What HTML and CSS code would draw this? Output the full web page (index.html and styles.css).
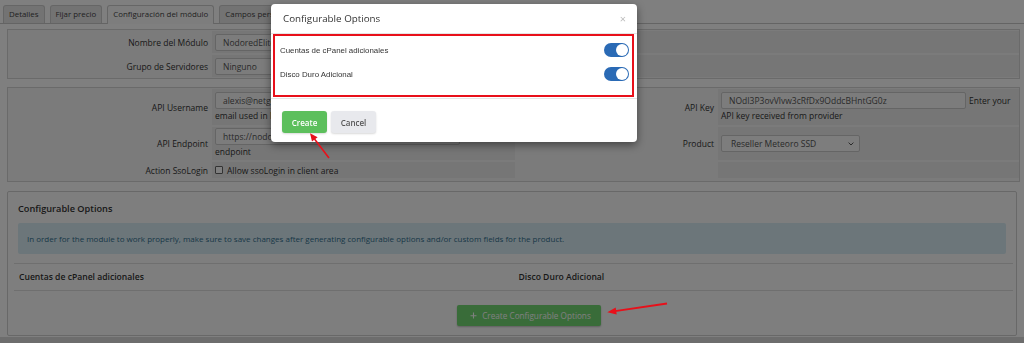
FILE: index.html
```html
<!DOCTYPE html>
<html lang="es">
<head>
<meta charset="utf-8">
<title>Configuración del módulo</title>
<link rel="stylesheet" href="styles.css">
</head>
<body>
<div class="page">
  <nav class="tabs">
    <div class="tab">Detalles</div>
    <div class="tab">Fijar precio</div>
    <div class="tab active">Configuración del módulo</div>
    <div class="tab">Campos personalizados</div>
    <div class="tab">Actualizaciones</div>
    <div class="tab">Otros</div>
    <div class="tab">Enlaces</div>
  </nav>
  <div class="tab-content">
    <div class="panel form-one">
      <div class="label">Nombre del Módulo</div>
      <div class="field center"><span class="input w-name">NodoredElite</span></div>
      <div class="label">Grupo de Servidores</div>
      <div class="field center"><span class="input select w-group">Ninguno</span></div>
    </div>

    <div class="panel form-two">
      <div class="label">API Username</div>
      <div class="field help">
        <div class="help-first"><span class="input w-half">alexis@netgocio.com</span><span class="help-text">Enter your</span></div>
        <div class="help-line">email used in Nodored panel</div>
      </div>
      <div class="label">API Key</div>
      <div class="field help">
        <div class="help-first"><span class="input w-half">NOdI3P3ovVlvw3cRfDx9OddcBHntGG0z</span><span class="help-text">Enter your</span></div>
        <div class="help-line">API key received from provider</div>
      </div>

      <div class="label">API Endpoint</div>
      <div class="field help tight">
        <div class="help-first"><span class="input w-half">https://nodored.com/api</span><span class="help-text">Enter API</span></div>
        <div class="help-line">endpoint</div>
      </div>
      <div class="label">Product</div>
      <div class="field center"><span class="input select w-product">Reseller Meteoro SSD<svg class="chev" viewBox="0 0 6 4" width="6" height="4"><polyline points="0.6,0.6 3,3 5.4,0.6" fill="none" stroke="#555" stroke-width="1"/></svg></span></div>

      <div class="label">Action SsoLogin</div>
      <div class="field center"><span class="check"><span class="box"></span>Allow ssoLogin in client area</span></div>
      <div class="label"></div>
      <div class="field"></div>
    </div>

    <section class="panel options">
      <h3 class="options-title">Configurable Options</h3>
      <div class="alert">In order for the module to work properly, make sure to save changes after generating configurable options and/or custom fields for the product.</div>
      <div class="opt-table">
        <div class="opt-cell">Cuentas de cPanel adicionales</div>
        <div class="opt-cell">Disco Duro Adicional</div>
      </div>
      <div class="actions">
        <button class="btn-green"><svg class="plus" viewBox="0 0 7 7" width="7" height="7"><path d="M3.5 0.5V6.5M0.5 3.8H6.5" stroke="#fff" stroke-width="1.1"/></svg>Create Configurable Options</button>
      </div>
    </section>
  </div>
</div>

<div class="backdrop"></div>

<div class="modal">
  <div class="modal-header">
    <span class="modal-title">Configurable Options</span>
    <span class="modal-close">×</span>
  </div>
  <div class="modal-body">
    <div class="opt-row">
      <span>Cuentas de cPanel adicionales</span>
      <span class="toggle"><span class="knob"></span></span>
    </div>
    <div class="opt-row">
      <span>Disco Duro Adicional</span>
      <span class="toggle"><span class="knob"></span></span>
    </div>
    <div class="highlight"></div>
  </div>
  <div class="modal-footer">
    <button class="btn btn-create">Create</button>
    <button class="btn btn-cancel">Cancel</button>
  </div>
</div>

<svg class="annotations" viewBox="0 0 1024 343" width="1024" height="343">
  <line x1="329" y1="158" x2="314.5" y2="139" stroke="#e8101a" stroke-width="1.6"/>
  <polygon points="310,133.3 317.6,137.3 312,141.5" fill="#e8101a"/>
  <line x1="667" y1="303.5" x2="615" y2="311.2" stroke="#e8101a" stroke-width="1.8"/>
  <polygon points="607.3,312.3 615.7,307.6 616.7,314.6" fill="#e8101a"/>
</svg>
</body>
</html>
```

FILE: styles.css
```css
* { box-sizing: border-box; }

html, body {
  margin: 0;
  width: 1024px;
  height: 343px;
  overflow: hidden;
}

body {
  position: relative;
  background: #dadada;
  font-family: "Open Sans", "DejaVu Sans", sans-serif;
  color: #333;
}

/* ---------- tabs ---------- */
.tabs {
  display: flex;
  align-items: flex-end;
  gap: 5px;
  height: 24px;
  padding: 5px 0 0 3px;
  background: #fff;
  border-bottom: 1px solid #c9c9c9;
}

.tab {
  height: 18px;
  padding: 0 5px;
  border: 1px solid #cdcdcd;
  border-bottom: 0;
  border-radius: 3px 3px 0 0;
  background: #e6e6e6;
  font-size: 7.9px;
  line-height: 17px;
  color: #444;
  white-space: nowrap;
}

.tab.active {
  background: #fbfbfb;
  height: 19px;
  margin-bottom: -1px;
}

/* ---------- content ---------- */
.tab-content {
  background: #fff;
  padding: 5px 4px 1px 7px;
}

.panel {
  border: 1px solid #d4d4d4;
  background: #f6f6f6;
}

.form-one {
  display: grid;
  grid-template-columns: 204px 1fr;
  grid-template-rows: 22px 22px;
  row-gap: 2px;
  padding: 1px 0;
}

.form-two {
  margin-top: 8px;
  display: grid;
  grid-template-columns: 204px 303px 203px 1fr;
  grid-template-rows: 36px 33px 16px;
  row-gap: 2px;
  padding: 1px 0 3px;
}

.label {
  display: flex;
  align-items: center;
  justify-content: flex-end;
  padding-right: 4px;
  font-size: 8.5px;
  color: #333;
  white-space: nowrap;
}

.field {
  background: #ececec;
  font-size: 8.5px;
  color: #333;
  padding-left: 3px;
}

.field.center {
  display: flex;
  align-items: center;
}

.field.help {
  padding: 3px 2px 0 3px;
  line-height: 14px;
}

.field.help.tight {
  padding-top: 1px;
}

.help-first {
  display: flex;
  align-items: center;
  gap: 3px;
  height: 17px;
  white-space: nowrap;
}

.help-line {
  height: 14px;
  white-space: nowrap;
}

.input {
  display: inline-flex;
  align-items: center;
  flex: none;
  height: 17px;
  padding: 0 7px;
  border: 1px solid #cbcbcb;
  border-radius: 2px;
  background: #f8f8f8;
  font-size: 8.5px;
  color: #555;
  white-space: nowrap;
  overflow: hidden;
}

.w-name { width: 250px; }
.w-group { width: 150px; }
.w-half { width: 245px; }
.w-product {
  width: 139px;
  justify-content: space-between;
  padding: 0 5px 0 9px;
  background: #fafafa;
}

.check {
  display: inline-flex;
  align-items: center;
  gap: 4px;
  font-size: 8.5px;
  color: #333;
}

.check .box {
  width: 8px;
  height: 8px;
  border: 1px solid #666;
  border-radius: 1px;
  background: #fff;
}

/* ---------- configurable options panel ---------- */
.options {
  margin-top: 9px;
  margin-right: 3px;
  background: #fdfdfd;
  border-color: #d0d0d0;
  border-radius: 2px;
}

.options-title {
  margin: 0;
  padding: 11px 10px 0;
  font-size: 9.2px;
  font-weight: 600;
  line-height: 12px;
  color: #333;
}

.alert {
  display: flex;
  align-items: center;
  height: 31px;
  margin: 8px 10px 0;
  padding: 0 9px;
  background: #d9ecf4;
  border-radius: 2px;
  font-size: 8px;
  color: #31708f;
}

.opt-table {
  display: grid;
  grid-template-columns: 1fr 1fr;
  margin: 9px 3px 0 6px;
  border-top: 1px solid #dedede;
  border-bottom: 1px solid #dedede;
}

.opt-cell {
  padding-left: 5px;
  font-size: 8.6px;
  font-weight: 600;
  line-height: 26px;
  color: #333;
}

.actions {
  display: flex;
  justify-content: center;
  padding: 14px 0 9px 34px;
}

.btn-green {
  display: inline-flex;
  align-items: center;
  gap: 5px;
  height: 21px;
  padding: 0 10px 0 13px;
  border: 0;
  border-radius: 2px;
  background: #72d872;
  color: #fff;
  font-family: "Open Sans", sans-serif;
  font-size: 8.2px;
  box-shadow: 0 1px 2px rgba(0, 0, 0, 0.25);
}

/* ---------- modal ---------- */
.backdrop {
  position: fixed;
  inset: 0;
  background: rgba(0, 0, 0, 0.5);
  z-index: 10;
}

.modal {
  position: absolute;
  left: 271px;
  top: 4px;
  width: 366px;
  background: #fff;
  border-radius: 4px;
  box-shadow: 0 3px 9px rgba(0, 0, 0, 0.45);
  z-index: 20;
}

.modal-header {
  display: flex;
  align-items: center;
  justify-content: space-between;
  height: 30px;
  padding: 0 11px 0 12px;
  border-bottom: 1px solid #e5e5e5;
}

.modal-title {
  font-size: 9.8px;
  color: #333;
}

.modal-close {
  font-size: 11px;
  color: #bdbdbd;
  line-height: 1;
}

.modal-body {
  position: relative;
  padding: 4px 8px 12px 9px;
}

.opt-row {
  display: flex;
  align-items: center;
  justify-content: space-between;
  height: 24px;
  font-family: "Liberation Sans", Arial, sans-serif;
  font-size: 7.9px;
  color: #333;
}

.toggle {
  display: flex;
  align-items: center;
  justify-content: flex-end;
  width: 25px;
  height: 14px;
  padding: 1px;
  border-radius: 7px;
  background: #2a6ab5;
}

.knob {
  width: 12px;
  height: 12px;
  border-radius: 50%;
  background: #fff;
}

.highlight {
  position: absolute;
  left: 2px;
  right: 3px;
  top: 0;
  bottom: 1px;
  border: 2px solid #e8101a;
}

.modal-footer {
  display: flex;
  gap: 4px;
  padding: 12px 11px 9px;
  border-top: 1px solid #e5e5e5;
}

.btn {
  width: 45px;
  height: 22px;
  border: 0;
  border-radius: 3px;
  font-family: "Open Sans", sans-serif;
  font-size: 8px;
  font-weight: 600;
  box-shadow: 0 1px 2px rgba(0, 0, 0, 0.15);
}

.btn-create {
  background: #5cbf5c;
  color: #fff;
}

.btn-cancel {
  background: #e8e9ed;
  color: #555;
}

/* ---------- annotation layer ---------- */
.annotations {
  position: absolute;
  left: 0;
  top: 0;
  z-index: 30;
  pointer-events: none;
}
```
